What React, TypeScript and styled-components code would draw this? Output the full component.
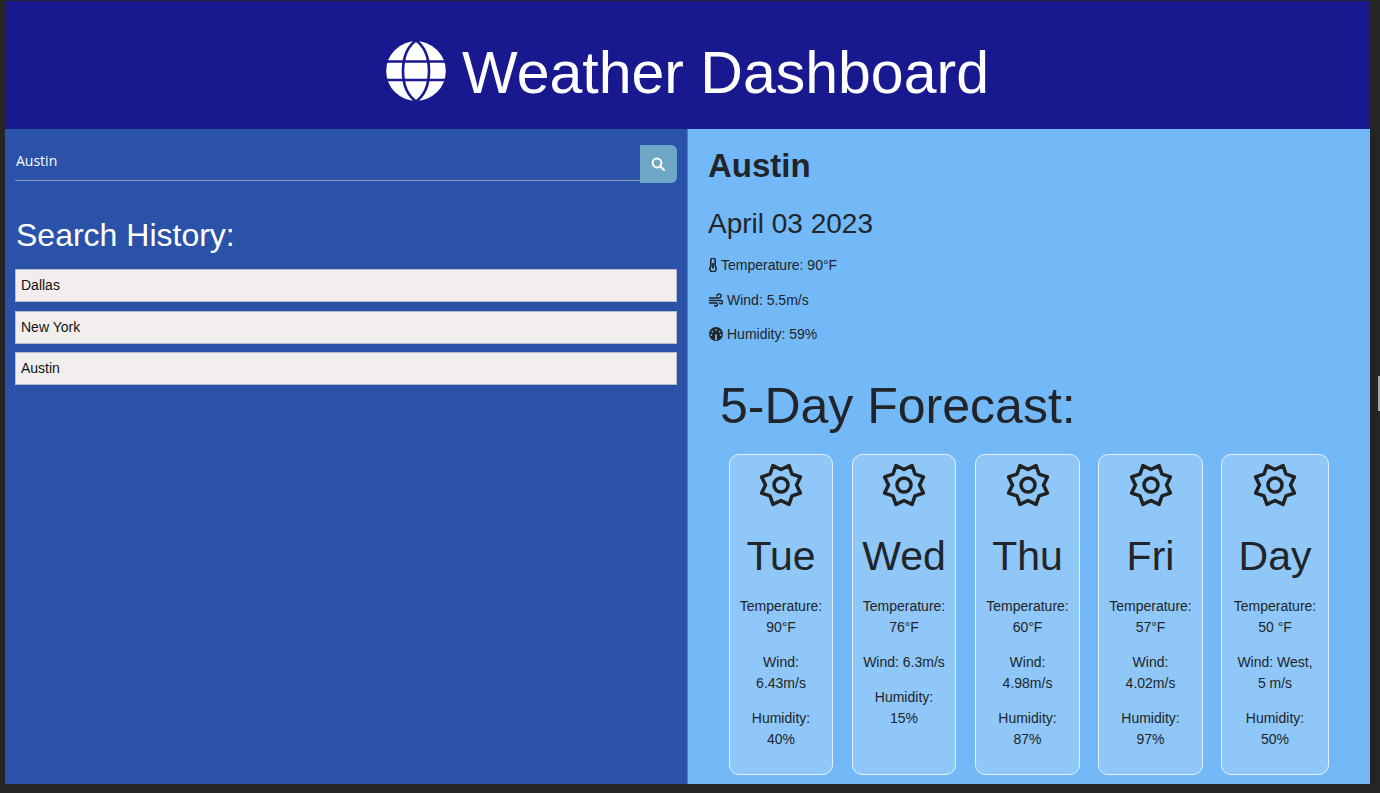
import React from "react";
import styled, { createGlobalStyle } from "styled-components";

const Global = createGlobalStyle`
  html, body { margin: 0; padding: 0; height: 100%; background: #252526; overflow: hidden; }
  #root { height: 100%; }
  * { box-sizing: border-box; }
`;
const Frame = styled.div`
  width: 1380px; height: 793px; padding: 1px 10px 9px 5px;
  display: flex; flex-direction: column; position: relative;
  font-family: "Liberation Sans", Arial, sans-serif; color: #212529;
`;
const ScrollHandle = styled.div`
  position: absolute; right: 0; top: 376px; width: 2px; height: 35px; background: #a8a8a8;
`;
const Header = styled.header`
  height: 128px; background: #18188f; color: #fff;
  display: flex; align-items: center; justify-content: center; gap: 16px; padding-top: 12px;
`;
const Title = styled.h1`
  margin: 4px 0 0; font-size: 59px; font-weight: 400; line-height: 72px;
`;
const Main = styled.main`
  flex: 1; display: grid; grid-template-columns: 683px 1fr; min-height: 0;
`;
const Left = styled.section`
  background: #2a52a8; padding: 16px 10px 0 10px; border-right: 1px solid #4f7fc9;
`;
const SearchRow = styled.div`
  display: flex; height: 38px; align-items: stretch;
`;
const SearchField = styled.div`
  flex: 1; height: 36px; border-bottom: 1px solid #8f9bb5; color: #fff; padding: 6px 0 0 1px;
  font: 14px/20px "Open Sans", "Noto Sans", sans-serif;
`;
const SearchButton = styled.button`
  width: 37.5px; height: 38px; border: 0; padding: 0; background: #6fa8c6; color: #fff;
  border-radius: 0 6px 6px 0; display: flex; align-items: center; justify-content: center;
`;
const HistoryTitle = styled.h2`
  margin: 33px 0 15px 1px; font-size: 32px; line-height: 38px; font-weight: 400; color: #fff;
`;
const HistoryItem = styled.div`
  height: 33px; background: #f2eeee; border: 1px solid #b4bccb; color: #111;
  font-size: 14px; line-height: 30px; padding-left: 5px; margin-bottom: 8.5px;
`;
const Right = styled.section`
  background: #74b9f7; padding: 18px 20px 0 20px; min-width: 0;
`;
const City = styled.h2`
  margin: 0 0 8px; font-size: 33px; line-height: 38px; font-weight: 700;
`;
const DateLine = styled.h3`
  margin: 22px 0 14px; font-size: 28px; line-height: 34px; font-weight: 400;
`;
const Stat = styled.p`
  margin: 0 0 14px; font-size: 14px; line-height: 20.5px; display: flex; align-items: center; gap: 3px;
`;
const ForecastTitle = styled.h2`
  margin: 31px 0 18px 12px; font-size: 50px; line-height: 60px; font-weight: 400;
`;
const Cards = styled.div`
  display: flex; margin-left: 21px;
`;
const Card = styled.article<{ $w: number; $after: number }>`
  width: ${(p) => p.$w}px; margin-right: ${(p) => p.$after}px; height: 321px; flex: none;
  background: rgba(255,255,255,.2);
  border: 1px solid #e3f1fd; border-radius: 10px; padding-top: 8px; text-align: center;
`;
const SunWrap = styled.div`
  height: 44px; display: flex; justify-content: center;
`;
const Day = styled.h3`
  margin: 25px 0 16px; font-size: 41px; line-height: 48px; font-weight: 400;
`;
const CardText = styled.p`
  width: 84px; margin: 0 auto 14px; font-size: 14px; line-height: 21px;
`;

const Globe = () => (
  <svg width="60" height="60" viewBox="0 0 60 60">
    <circle cx="30" cy="30" r="29.8" fill="#fff" />
    <g fill="none" stroke="#18188f" strokeWidth="2.6">
      <path d="M30 -0.5C21 6 17 18 17 30S21 54 30 60.5C39 54 43 42 43 30S39 6 30 -0.5Z" />
      <path d="M-2 20.5H62M-2 39H62" />
    </g>
  </svg>
);
const Search = () => (
  <svg width="14" height="14" viewBox="0 0 14 14" fill="none" stroke="#fff" strokeWidth="2">
    <circle cx="6" cy="6" r="4.4" /><path d="M9.2 9.2L13 13" strokeLinecap="round" />
  </svg>
);
const Thermo = () => (
  <svg width="10" height="14" viewBox="0 0 10 14" fill="none" stroke="#212529" strokeWidth="1.6">
    <path d="M2.8 2.4a2.2 2.2 0 0 1 4.4 0v5.9a3.2 3.2 0 1 1-4.4 0z" />
    <path d="M5 5v5.5" strokeWidth="1.8" />
  </svg>
);
const Wind = () => (
  <svg width="16" height="14" viewBox="0 0 15 14" fill="none" stroke="#212529" strokeWidth="1.4" strokeLinecap="round">
    <path d="M1 5h9.5a2 2 0 1 0-2-2" />
    <path d="M1 7.5h11.5a1.6 1.6 0 1 1-1.3 2.6" />
    <path d="M1 10h6.5a1.6 1.6 0 1 1-1.4 2.5" />
  </svg>
);
const Gauge = () => (
  <svg width="16" height="14" viewBox="0 0 16 14">
    <circle cx="8" cy="7" r="7" fill="#212529" />
    <path d="M8 7.5V13" stroke="#74b9f7" strokeWidth="1.8" />
    <g fill="#74b9f7">
      <circle cx="8" cy="2.8" r=".9" /><circle cx="4.4" cy="4.6" r=".9" /><circle cx="11.6" cy="4.6" r=".9" />
      <circle cx="3.4" cy="8" r=".9" /><circle cx="12.6" cy="8" r=".9" />
    </g>
  </svg>
);
const starPts = (() => {
  const pts: string[] = [];
  for (let i = 0; i < 16; i++) {
    const a = (i * Math.PI) / 8 - Math.PI / 2 + Math.PI / 8;
    const r = i % 2 === 0 ? 21 : 15.5;
    pts.push(`${(22 + r * Math.cos(a)).toFixed(2)},${(22 + r * Math.sin(a)).toFixed(2)}`);
  }
  return pts.join(" ");
})();
const Sun = () => (
  <svg width="44" height="44" viewBox="0 0 44 44" fill="none" stroke="#212121" strokeWidth="3.5" strokeLinejoin="round">
    <polygon points={starPts} />
    <circle cx="22" cy="22" r="7" />
  </svg>
);

const days = [
  { w: 104, after: 19, d: "Tue", t: "90°F", wind: "Wind: 6.43m/s", h: "40%" },
  { w: 104, after: 19, d: "Wed", t: "76°F", wind: "Wind: 6.3m/s", h: "15%" },
  { w: 105, after: 18, d: "Thu", t: "60°F", wind: "Wind: 4.98m/s", h: "87%" },
  { w: 105, after: 18, d: "Fri", t: "57°F", wind: "Wind: 4.02m/s", h: "97%" },
  { w: 108, after: 0, d: "Day", t: "50 °F", wind: "Wind: West, 5 m/s", h: "50%" },
];

export default function App() {
  return (
    <>
      <Global />
      <Frame>
        <Header>
          <Globe />
          <Title>Weather Dashboard</Title>
        </Header>
        <Main>
          <Left>
            <SearchRow>
              <SearchField>Austin</SearchField>
              <SearchButton aria-label="Search"><Search /></SearchButton>
            </SearchRow>
            <HistoryTitle>Search History:</HistoryTitle>
            {["Dallas", "New York", "Austin"].map((c) => <HistoryItem key={c}>{c}</HistoryItem>)}
          </Left>
          <Right>
            <City>Austin</City>
            <DateLine>April 03 2023</DateLine>
            <Stat><Thermo />Temperature: 90°F</Stat>
            <Stat><Wind />Wind: 5.5m/s</Stat>
            <Stat><Gauge />Humidity: 59%</Stat>
            <ForecastTitle>5-Day Forecast:</ForecastTitle>
            <Cards>
              {days.map((x) => (
                <Card key={x.d} $w={x.w} $after={x.after}>
                  <SunWrap><Sun /></SunWrap>
                  <Day>{x.d}</Day>
                  <CardText>Temperature:<br />{x.t}</CardText>
                  <CardText>{x.wind}</CardText>
                  <CardText>Humidity:<br />{x.h}</CardText>
                </Card>
              ))}
            </Cards>
          </Right>
        </Main>
        <ScrollHandle />
      </Frame>
    </>
  );
}
